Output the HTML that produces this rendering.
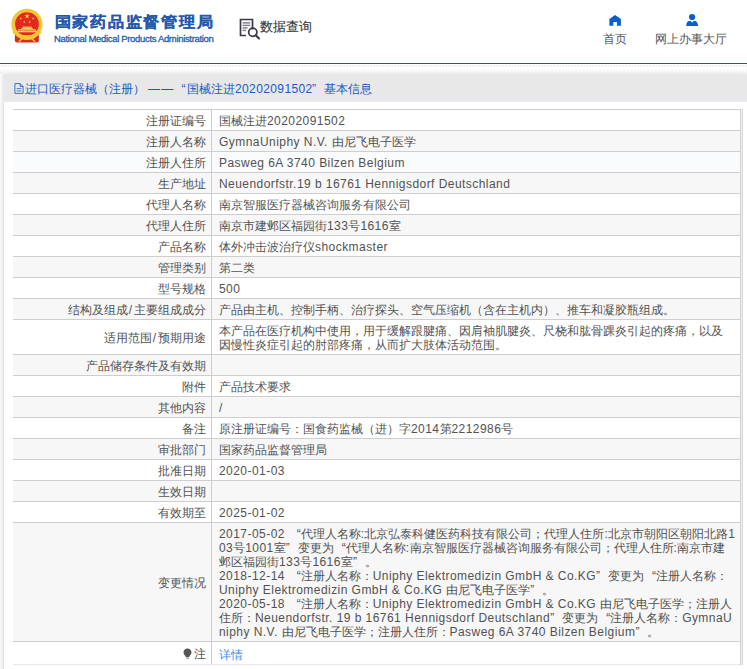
<!DOCTYPE html>
<html><head><meta charset="utf-8">
<style>
*{margin:0;padding:0;box-sizing:border-box}
html,body{width:747px;height:669px;overflow:hidden;background:#fff}
body{font-family:"Liberation Sans",sans-serif;font-size:12px;color:#525252;position:relative}
.abs{position:absolute}
#title{left:54.5px;top:8.9px;font-size:16.5px;font-weight:bold;color:#2459ae;-webkit-text-stroke:0.2px #2459ae;white-space:nowrap;line-height:24px;letter-spacing:0.75px;transform:scaleY(0.93);transform-origin:0 20px}
#etitle{left:54px;top:33px;font-size:9.5px;color:#2459ae;-webkit-text-stroke:0.3px #2459ae;white-space:nowrap;line-height:12px;letter-spacing:-0.33px}
#sq{left:260px;top:17px;font-size:13px;color:#3a3a3a;line-height:20px;-webkit-text-stroke:0.15px #3a3a3a}
.nav{font-size:12px;color:#555;line-height:16px;white-space:nowrap}
#bline{left:0;top:63px;width:747px;height:1px;background:#0b5cc0}
#hatch{left:0;top:65px;width:747px;height:2px}
#grad{left:0;top:67px;width:747px;height:7px;background:linear-gradient(#fff 25%,#efefef)}
#box{left:3px;top:74px;width:744px;height:600px;border-left:1px solid #e2e2e2;box-shadow:-2px 0 3px #eee}
#panel{left:3px;top:74px;width:744px;height:28px;background:#e8e8e8;border-bottom:1px solid #e6e9f2}
.pt{top:81px;color:#1a5ac4;font-size:12px;line-height:16px;white-space:nowrap}
.row{position:absolute;left:13px;width:727px;border-top:1px solid #cfcdcf}
.g{background:#f7f7f7}
.h{background:#fafbfd}
.lab{position:absolute;left:0;width:199px;top:0;bottom:0;text-align:right;border-right:1px solid #cfcdcf;white-space:nowrap}
.lt{position:absolute;right:5.4px;white-space:nowrap}
.vt{position:absolute;left:206px;white-space:nowrap;line-height:13.8px}
.l{letter-spacing:0.45px} .ql{display:inline-block;width:12px;text-align:right} .qr{display:inline-block;width:12px;text-align:left}
</style></head><body>
<!-- emblem -->
<svg class="abs" style="left:0;top:0" width="50" height="50" viewBox="0 0 50 50">
  <path d="M15 33 L14.8 40.5 Q15 42.5 18 42.5 L36 42.5 Q39 42.5 38.9 40.5 L38.8 33 Z" fill="#dd2a1e"/>
  <circle cx="26.95" cy="24.4" r="15.6" fill="#f3c63a"/>
  <circle cx="26.95" cy="24.1" r="11.9" fill="#e5281d"/>
  <polygon points="27.10,13.30 27.75,15.30 29.86,15.30 28.15,16.54 28.80,18.55 27.10,17.31 25.40,18.55 26.05,16.54 24.34,15.30 26.45,15.30" fill="#f3cf45"/>
  <polygon points="21.50,17.39 21.29,18.38 22.17,18.89 21.16,19.00 20.95,19.99 20.53,19.06 19.52,19.17 20.28,18.49 19.86,17.56 20.74,18.07" fill="#f3cf45"/>
  <polygon points="32.40,17.39 33.16,18.07 34.04,17.56 33.62,18.49 34.38,19.17 33.37,19.06 32.95,19.99 32.74,19.00 31.73,18.89 32.61,18.38" fill="#f3cf45"/>
  <polygon points="24.76,20.75 24.82,21.76 25.80,22.03 24.85,22.39 24.90,23.41 24.26,22.62 23.31,22.98 23.87,22.13 23.23,21.34 24.21,21.60" fill="#f3cf45"/>
  <polygon points="29.14,20.75 29.69,21.60 30.67,21.34 30.03,22.13 30.59,22.98 29.64,22.62 29.00,23.41 29.05,22.39 28.10,22.03 29.08,21.76" fill="#f3cf45"/>
  <rect x="22.5" y="26.6" width="9.2" height="1.2" fill="#f6d36a"/>
  <rect x="21.5" y="27.9" width="11.2" height="1.3" fill="#f4cf70"/>
  <rect x="18" y="29.3" width="18" height="1.3" fill="#f6d560"/>
  <rect x="17" y="30.9" width="20" height="1.4" fill="#f3cc50"/>
  <path d="M12.5 31 Q27 39.5 41.5 31 L41 33.5 Q27 41 13 33.5 Z" fill="#f3c63a"/>
  <path d="M19 41.8 L22.5 38.3 L31.5 38.3 L35 41.8" stroke="#f3c63a" stroke-width="1.5" fill="none"/>
  <ellipse cx="27" cy="37.2" rx="2.6" ry="1.7" fill="#f3c63a"/>
</svg>
<div id="title" class="abs">国家药品监督管理局</div>
<div id="etitle" class="abs">National Medical Products Administration</div>
<!-- doc search icon -->
<svg class="abs" style="left:238px;top:17px" width="24" height="24" viewBox="0 0 24 24">
  <path d="M14.5 12.5 V2.5 H2.5 V18.5 H8" stroke="#3a3a48" stroke-width="1.7" fill="none"/>
  <rect x="4.6" y="5.2" width="7.6" height="1.4" fill="#7a7a80"/>
  <rect x="4.6" y="7.7" width="7.6" height="1.4" fill="#7a7a80"/>
  <rect x="4.6" y="10.2" width="5" height="1.4" fill="#7a7a80"/>
  <rect x="4.6" y="12.7" width="3.4" height="1.4" fill="#7a7a80"/>
  <circle cx="14.8" cy="15.2" r="4.1" stroke="#3a3a48" stroke-width="1.7" fill="none"/>
  <path d="M17.8 18.2 L21 21.4" stroke="#3a3a48" stroke-width="2.1" stroke-linecap="round"/>
</svg>
<div id="sq" class="abs">数据查询</div>
<!-- nav icons -->
<svg class="abs" style="left:609px;top:15px" width="13" height="11" viewBox="0 0 13 11">
  <path d="M0.4 4 L6.1 0 L11.9 4 L11.9 10.7 L7.9 10.7 L7.9 6.9 L4.3 6.9 L4.3 10.7 L0.4 10.7 Z" fill="#0b5ed0"/>
</svg>
<div class="abs nav" style="left:603px;top:31px">首页</div>
<svg class="abs" style="left:686px;top:13px" width="13" height="13" viewBox="0 0 13 13">
  <circle cx="6.1" cy="4" r="3.1" fill="#0b5ed0"/>
  <path d="M0.2 12.9 Q0.6 8.6 2.8 7.9 L4.8 7.9 L6.1 9.7 L7.4 7.9 L9.3 7.9 Q11.6 8.6 12.1 12.9 Z" fill="#0b5ed0"/>
</svg>
<div class="abs nav" style="left:655px;top:31px">网上办事大厅</div>

<div id="bline" class="abs"></div>
<svg id="hatch" class="abs" width="747" height="2"><defs><pattern id="hp" width="3" height="2" patternUnits="userSpaceOnUse"><rect x="2" y="0" width="1" height="1" fill="#dedede"/><rect x="1" y="1" width="1" height="1" fill="#e8e8e8"/></pattern></defs><rect width="747" height="2" fill="url(#hp)"/></svg>
<div id="grad" class="abs"></div>
<div id="box" class="abs"></div>
<div id="panel" class="abs"></div>
<svg class="abs" style="left:14px;top:83px" width="10" height="11" viewBox="0 0 10 11">
  <path d="M0.9 0.6 H6.2 L9.1 3.5 V10.4 H0.9 Z" stroke="#2a62c8" stroke-width="0.9" fill="none"/>
  <path d="M6.2 0.6 V3.5 H9.1" stroke="#2a62c8" stroke-width="0.9" fill="none"/>
  <rect x="2.6" y="5.3" width="4.8" height="0.8" fill="#2a62c8"/><rect x="2.6" y="7.6" width="4.8" height="0.8" fill="#2a62c8"/>
</svg>
<div class="abs pt" style="left:24.6px">进口医疗器械（注册）</div>
<div class="abs pt" style="left:148px;letter-spacing:1.3px">——</div>
<div class="abs pt" style="left:181.6px">“</div>
<div class="abs pt" style="left:187px">国械注进<span style="letter-spacing:0.38px">20202091502</span></div>
<div class="abs pt" style="left:312px">”</div>
<div class="abs pt" style="left:324px">基本信息</div>
<div id="tbl"><div class="row" style="top:109px;height:22px"><div class="lab"><span class="lt" style="top:5.10px;line-height:13.8px">注册证编号</span></div><div class="vt" style="top:5.10px">国械注进<span class="l">20202091502</span></div></div>
<div class="row g" style="top:130px;height:22px"><div class="lab"><span class="lt" style="top:5.10px;line-height:13.8px">注册人名称</span></div><div class="vt" style="top:5.10px"><span class="l">GymnaUniphy N.V. </span>由尼飞电子医学</div></div>
<div class="row h" style="top:151px;height:22px"><div class="lab"><span class="lt" style="top:5.10px;line-height:13.8px">注册人住所</span></div><div class="vt" style="top:5.10px"><span class="l">Pasweg 6A 3740 Bilzen Belgium</span></div></div>
<div class="row g" style="top:172px;height:22px"><div class="lab"><span class="lt" style="top:5.10px;line-height:13.8px">生产地址</span></div><div class="vt" style="top:5.10px"><span class="l">Neuendorfstr.19 b 16761 Hennigsdorf Deutschland</span></div></div>
<div class="row" style="top:193px;height:22px"><div class="lab"><span class="lt" style="top:5.10px;line-height:13.8px">代理人名称</span></div><div class="vt" style="top:5.10px">南京智服医疗器械咨询服务有限公司</div></div>
<div class="row g" style="top:214px;height:22px"><div class="lab"><span class="lt" style="top:5.10px;line-height:13.8px">代理人住所</span></div><div class="vt" style="top:5.10px">南京市建邺区福园街<span class="l">133</span>号<span class="l">1616</span>室</div></div>
<div class="row" style="top:235px;height:22px"><div class="lab"><span class="lt" style="top:5.10px;line-height:13.8px">产品名称</span></div><div class="vt" style="top:5.10px">体外冲击波治疗仪<span class="l">shockmaster</span></div></div>
<div class="row g" style="top:256px;height:22px"><div class="lab"><span class="lt" style="top:5.10px;line-height:13.8px">管理类别</span></div><div class="vt" style="top:5.10px">第二类</div></div>
<div class="row" style="top:277px;height:22px"><div class="lab"><span class="lt" style="top:5.10px;line-height:13.8px">型号规格</span></div><div class="vt" style="top:5.10px"><span class="l">500</span></div></div>
<div class="row g" style="top:298px;height:22px"><div class="lab"><span class="lt" style="top:5.10px;line-height:13.8px">结构及组成<span class="l" style="padding:0 1px">/</span>主要组成成分</span></div><div class="vt" style="top:5.10px">产品由主机、控制手柄、治疗探头、空气压缩机（含在主机内）、推车和凝胶瓶组成。</div></div>
<div class="row" style="top:319px;height:36px"><div class="lab"><span class="lt" style="top:12.10px;line-height:13.8px">适用范围<span class="l" style="padding:0 1px">/</span>预期用途</span></div><div class="vt" style="top:5.00px">本产品在医疗机构中使用，用于缓解跟腱痛、因肩袖肌腱炎、尺桡和肱骨踝炎引起的疼痛，以及</div><div class="vt" style="top:19.00px">因慢性炎症引起的肘部疼痛，从而扩大肢体活动范围。</div></div>
<div class="row g" style="top:354px;height:22px"><div class="lab"><span class="lt" style="top:5.10px;line-height:13.8px">产品储存条件及有效期</span></div></div>
<div class="row" style="top:375px;height:22px"><div class="lab"><span class="lt" style="top:5.10px;line-height:13.8px">附件</span></div><div class="vt" style="top:5.10px">产品技术要求</div></div>
<div class="row g" style="top:396px;height:22px"><div class="lab"><span class="lt" style="top:5.10px;line-height:13.8px">其他内容</span></div><div class="vt" style="top:5.10px"><span class="l">/</span></div></div>
<div class="row" style="top:417px;height:22px"><div class="lab"><span class="lt" style="top:5.10px;line-height:13.8px">备注</span></div><div class="vt" style="top:5.10px">原注册证编号：国食药监械（进）字<span class="l">2014</span>第<span class="l">2212986</span>号</div></div>
<div class="row g" style="top:438px;height:22px"><div class="lab"><span class="lt" style="top:5.10px;line-height:13.8px">审批部门</span></div><div class="vt" style="top:5.10px">国家药品监督管理局</div></div>
<div class="row" style="top:459px;height:22px"><div class="lab"><span class="lt" style="top:5.10px;line-height:13.8px">批准日期</span></div><div class="vt" style="top:5.10px"><span class="l">2020-01-03</span></div></div>
<div class="row g" style="top:480px;height:22px"><div class="lab"><span class="lt" style="top:5.10px;line-height:13.8px">生效日期</span></div></div>
<div class="row" style="top:501px;height:22px"><div class="lab"><span class="lt" style="top:5.10px;line-height:13.8px">有效期至</span></div><div class="vt" style="top:5.10px"><span class="l">2025-01-02</span></div></div>
<div class="row g" style="top:522px;height:120px"><div class="lab"><span class="lt" style="top:54.10px;line-height:13.8px">变更情况</span></div><div class="vt" style="top:5.00px"><span class="l">2017-05-02 </span><span class="ql">“</span>代理人名称<span class="l">:</span>北京弘泰科健医药科技有限公司；代理人住所<span class="l">:</span>北京市朝阳区朝阳北路<span class="l">1</span></div><div class="vt" style="top:19.00px"><span class="l">03</span>号<span class="l">1001</span>室<span class="qr">”</span>变更为<span class="ql">“</span>代理人名称<span class="l">:</span>南京智服医疗器械咨询服务有限公司；代理人住所<span class="l">:</span>南京市建</div><div class="vt" style="top:33.00px">邺区福园街<span class="l">133</span>号<span class="l">1616</span>室<span class="qr">”</span>。</div><div class="vt" style="top:47.00px"><span class="l">2018-12-14 </span><span class="ql">“</span>注册人名称：<span class="l">Uniphy Elektromedizin GmbH &amp; Co.KG</span><span class="qr">”</span>变更为<span class="ql">“</span>注册人名称：</div><div class="vt" style="top:61.00px"><span class="l">Uniphy Elektromedizin GmbH &amp; Co.KG </span>由尼飞电子医学<span class="qr">”</span>。</div><div class="vt" style="top:75.00px"><span class="l">2020-05-18 </span><span class="ql">“</span>注册人名称：<span class="l">Uniphy Elektromedizin GmbH &amp; Co.KG </span>由尼飞电子医学；注册人</div><div class="vt" style="top:89.00px">住所：<span class="l">Neuendorfstr. 19 b 16761 Hennigsdorf Deutschland</span><span class="qr">”</span>变更为<span class="ql">“</span>注册人名称：<span class="l">GymnaU</span></div><div class="vt" style="top:103.00px"><span class="l">niphy N.V. </span>由尼飞电子医学；注册人住所：<span class="l">Pasweg 6A 3740 Bilzen Belgium</span><span class="qr">”</span>。</div></div>
<div class="row" style="top:641px;height:24px;border-bottom:1px solid #e4e9f3"><div class="lab"><span class="lt" style="top:6.10px;line-height:13.8px"><svg width="9" height="11" viewBox="0 0 9 11" style="vertical-align:-1px;margin-right:2px"><path d="M4.5 0.5 C7 0.5 8.5 2.5 8.5 4.5 C8.5 6.5 6.5 7.5 6.3 9 L2.7 9 C2.5 7.5 0.5 6.5 0.5 4.5 C0.5 2.5 2 0.5 4.5 0.5Z" fill="#555"/><rect x="3" y="9.6" width="3" height="1" fill="#777"/></svg>注</span></div><div class="vt" style="color:#3b8ee6;margin-top:1px;top:6.10px">详情</div></div>
<div class="abs" style="left:740px;top:109px;width:1px;height:556px;background:#d0d0d0"></div>
<div class="abs" style="left:741px;top:109px;width:1px;height:556px;background:#eceff5"></div>
<div class="abs" style="left:742px;top:109px;width:1px;height:556px;background:#d8d8d8"></div></div>
</body></html>
